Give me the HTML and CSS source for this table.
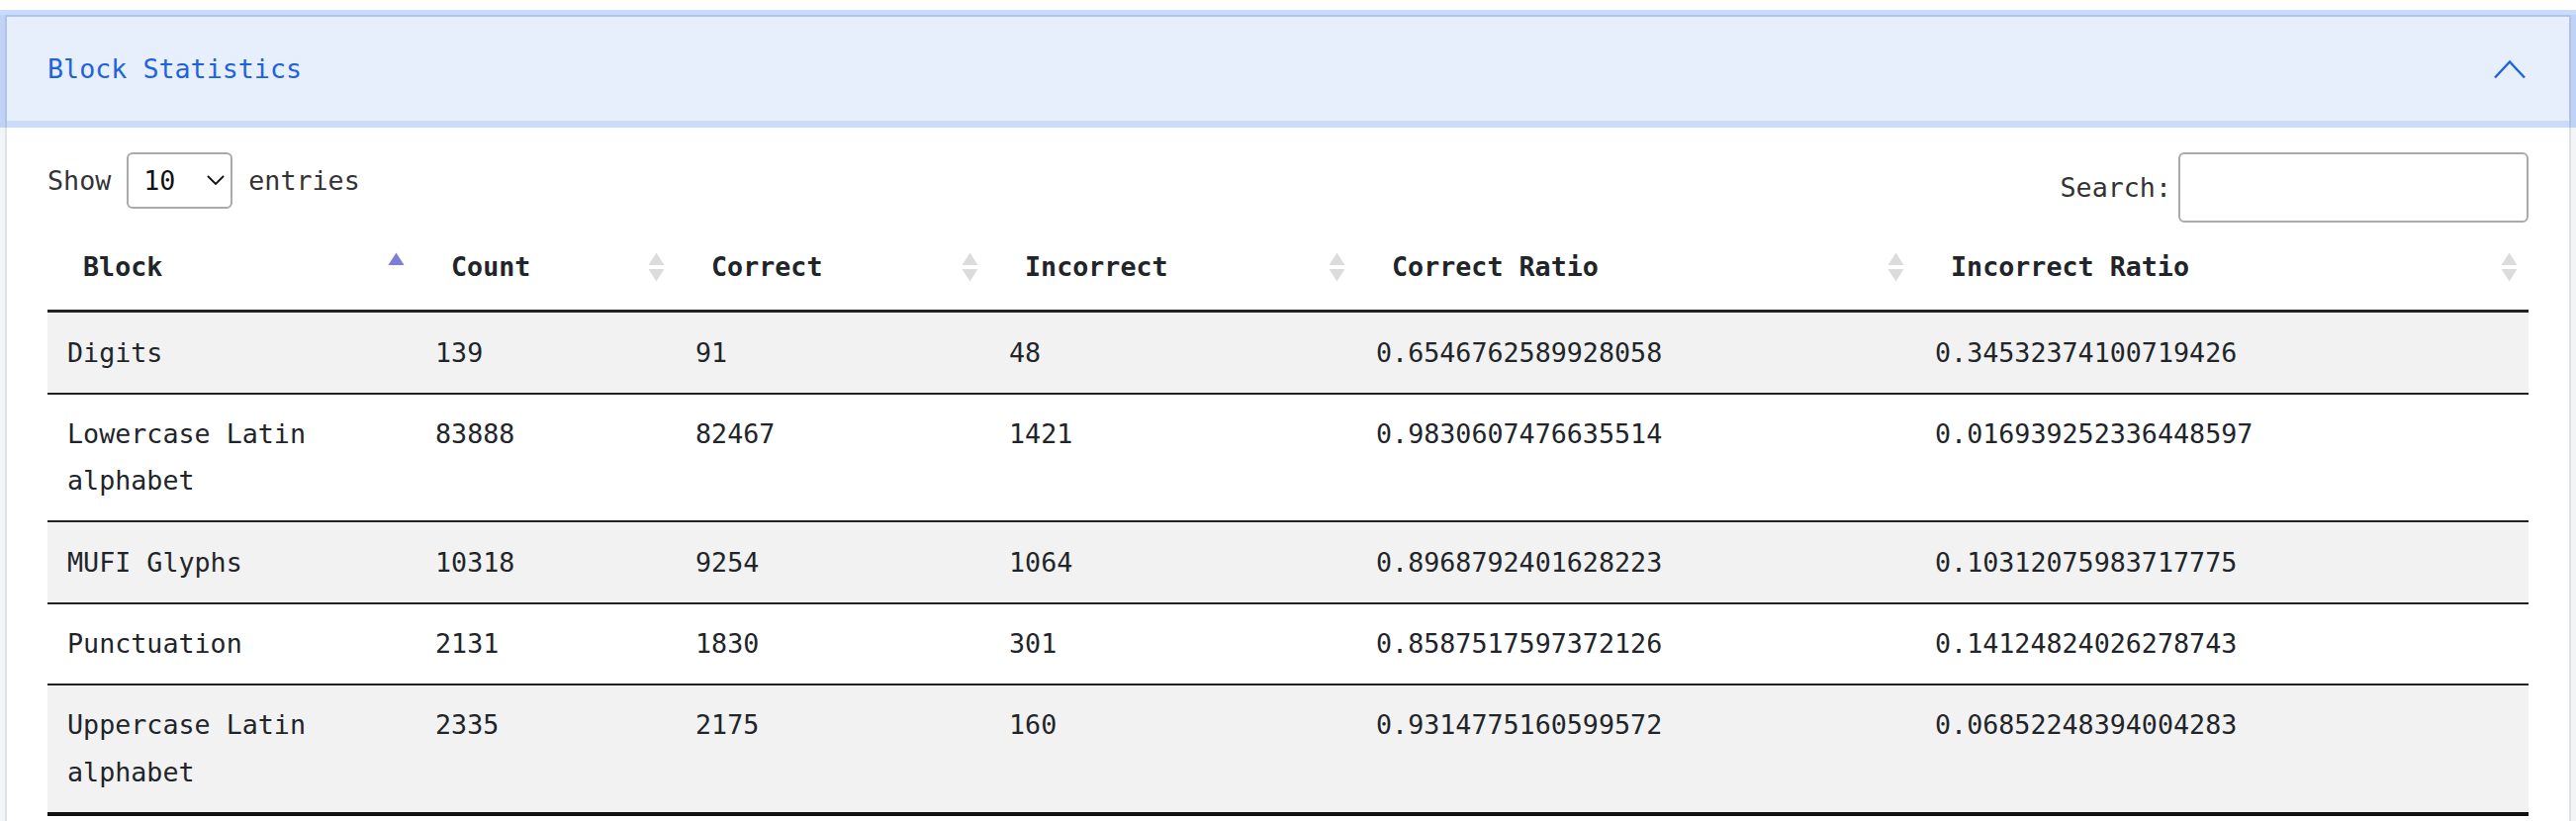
FILE: index.html
```html
<!DOCTYPE html>
<html lang="en">
<head>
<meta charset="utf-8">
<title>Block Statistics</title>
<link rel="stylesheet" href="styles.css">
</head>
<body>
<div class="page">
  <div class="frame">
    <div class="acc-item">
      <h2 class="acc-header">
        <button class="acc-button" type="button">
          <span class="acc-title">Block Statistics</span>
          <svg class="acc-chevron" width="32" height="20" viewBox="0 0 32 20" aria-hidden="true">
            <polyline points="1,18.5 16,2.5 31,18.5" fill="none" stroke="#1e63dc" stroke-width="2.4"/>
          </svg>
        </button>
      </h2>
      <div class="acc-body">
        <div class="dt-controls">
          <label class="dt-length">
            <span>Show</span>
            <span class="select-wrap">
              <select class="dt-select"><option>10</option><option>25</option><option>50</option><option>100</option></select>
              <svg class="select-caret" width="18" height="10" viewBox="0 0 18 10" aria-hidden="true">
                <polyline points="1,1 9,9 17,1" fill="none" stroke="#111" stroke-width="1.8"/>
              </svg>
            </span>
            <span>entries</span>
          </label>
          <label class="dt-filter">
            <span>Search:</span>
            <input class="dt-input" type="search">
          </label>
        </div>
        <table class="dt">
          <thead>
            <tr>
              <th class="c-block"><div class="th-inner"><span>Block</span>
                <svg class="sort" width="17" height="30" viewBox="0 0 17 30" aria-hidden="true"><path d="M0.5 13 L8.5 0.5 L16.5 13 Z" fill="#7b7fd9"/></svg></div></th>
              <th class="c-count"><div class="th-inner"><span>Count</span>
                <svg class="sort" width="17" height="30" viewBox="0 0 17 30" aria-hidden="true"><path d="M0.5 13 L8.5 0.5 L16.5 13 Z" fill="#dcdcdc"/><path d="M0.5 17 L16.5 17 L8.5 29.5 Z" fill="#dcdcdc"/></svg></div></th>
              <th class="c-correct"><div class="th-inner"><span>Correct</span>
                <svg class="sort" width="17" height="30" viewBox="0 0 17 30" aria-hidden="true"><path d="M0.5 13 L8.5 0.5 L16.5 13 Z" fill="#dcdcdc"/><path d="M0.5 17 L16.5 17 L8.5 29.5 Z" fill="#dcdcdc"/></svg></div></th>
              <th class="c-incorrect"><div class="th-inner"><span>Incorrect</span>
                <svg class="sort" width="17" height="30" viewBox="0 0 17 30" aria-hidden="true"><path d="M0.5 13 L8.5 0.5 L16.5 13 Z" fill="#dcdcdc"/><path d="M0.5 17 L16.5 17 L8.5 29.5 Z" fill="#dcdcdc"/></svg></div></th>
              <th class="c-cratio"><div class="th-inner"><span>Correct Ratio</span>
                <svg class="sort" width="17" height="30" viewBox="0 0 17 30" aria-hidden="true"><path d="M0.5 13 L8.5 0.5 L16.5 13 Z" fill="#dcdcdc"/><path d="M0.5 17 L16.5 17 L8.5 29.5 Z" fill="#dcdcdc"/></svg></div></th>
              <th class="c-iratio"><div class="th-inner"><span>Incorrect Ratio</span>
                <svg class="sort" width="17" height="30" viewBox="0 0 17 30" aria-hidden="true"><path d="M0.5 13 L8.5 0.5 L16.5 13 Z" fill="#dcdcdc"/><path d="M0.5 17 L16.5 17 L8.5 29.5 Z" fill="#dcdcdc"/></svg></div></th>
            </tr>
          </thead>
          <tbody>
            <tr>
              <td>Digits</td><td>139</td><td>91</td><td>48</td><td>0.6546762589928058</td><td>0.34532374100719426</td>
            </tr>
            <tr>
              <td>Lowercase Latin alphabet</td><td>83888</td><td>82467</td><td>1421</td><td>0.9830607476635514</td><td>0.016939252336448597</td>
            </tr>
            <tr>
              <td>MUFI Glyphs</td><td>10318</td><td>9254</td><td>1064</td><td>0.8968792401628223</td><td>0.10312075983717775</td>
            </tr>
            <tr>
              <td>Punctuation</td><td>2131</td><td>1830</td><td>301</td><td>0.8587517597372126</td><td>0.14124824026278743</td>
            </tr>
            <tr>
              <td>Uppercase Latin alphabet</td><td>2335</td><td>2175</td><td>160</td><td>0.9314775160599572</td><td>0.06852248394004283</td>
            </tr>
          </tbody>
        </table>
      </div>
    </div>
  </div>
</div>
</body>
</html>
```

FILE: styles.css
```css
* {
  box-sizing: border-box;
}

html, body {
  margin: 0;
  padding: 0;
  background: #ffffff;
}

body {
  font-family: "DejaVu Sans Mono", "Liberation Mono", monospace;
  font-size: 26.7px;
  line-height: 40px;
  color: #212529;
}

.page {
  padding-top: 15px;
}

.frame {
  background: #f3f4f6;
  padding: 0 5px;
}

.acc-item {
  background: #ffffff;
  border: 2px solid #dee2e6;
  border-bottom: 0;
}

.acc-header {
  margin: 0;
  font: inherit;
}

.acc-button {
  position: relative;
  z-index: 2;
  display: flex;
  align-items: center;
  width: 100%;
  margin: 0;
  padding: 32.5px 44px 32.5px 41px;
  border: 0;
  background: #e8effc;
  color: #1e63dc;
  font: inherit;
  line-height: 40px;
  text-align: left;
  box-shadow: 0 0 0 7px rgba(13, 90, 240, 0.22);
  cursor: pointer;
}

.acc-title {
  flex: 1 1 auto;
}

.acc-chevron {
  flex: 0 0 auto;
  display: block;
}

.acc-body {
  padding: 32px 41px 10px 41px;
}

.dt-controls {
  display: flex;
  justify-content: space-between;
  align-items: flex-start;
}

.dt-length {
  display: flex;
  align-items: center;
  gap: 16px;
  height: 57px;
  color: #333333;
}

.select-wrap {
  position: relative;
  display: block;
  width: 107px;
  height: 57px;
}

.dt-select {
  appearance: none;
  -webkit-appearance: none;
  display: block;
  width: 107px;
  height: 57px;
  margin: 0;
  padding: 0 0 0 15px;
  border: 2px solid #aaaaaa;
  border-radius: 6px;
  background: #ffffff;
  color: #111111;
  font: inherit;
}

.select-caret {
  position: absolute;
  right: 8px;
  top: 23px;
  pointer-events: none;
}

.dt-filter {
  display: flex;
  align-items: center;
  gap: 7px;
  height: 71px;
  color: #333333;
}

.dt-input {
  display: block;
  width: 354px;
  height: 71px;
  margin: 0;
  padding: 0 10px;
  border: 2px solid #aaaaaa;
  border-radius: 6px;
  background: #ffffff;
  font: inherit;
}

.dt {
  width: 100%;
  margin-top: 5px;
  border-collapse: collapse;
  table-layout: fixed;
}

.dt th {
  padding: 16.4px 11px 19.4px 36px;
  line-height: 47.5px;
  font-weight: bold;
  text-align: left;
  color: #212529;
  border-bottom: 3px solid #222222;
}

.th-inner {
  display: flex;
  justify-content: space-between;
  align-items: center;
}

.sort {
  display: block;
  flex: 0 0 auto;
}

.c-block { width: 372px; }
.c-count { width: 263px; }
.c-correct { width: 317px; }
.c-incorrect { width: 371px; }
.c-cratio { width: 565px; }
.c-iratio { width: 620px; }

.dt td {
  padding: 16.4px 20px;
  line-height: 47.5px;
  vertical-align: top;
  border-top: 2px solid #222222;
  color: #212529;
}

.dt tbody tr:nth-child(odd) td {
  background: #f2f2f2;
}

.dt tbody tr:last-child td {
  border-bottom: 4px solid #111111;
}
```
